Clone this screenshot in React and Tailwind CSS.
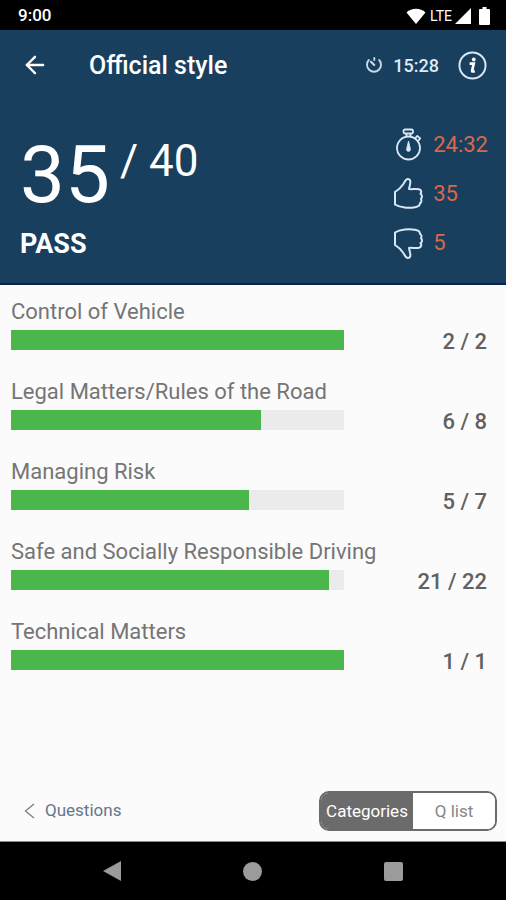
import React, { useState } from 'react';
import { ArrowLeft } from 'lucide-react';

const categories = [
  { name: 'Control of Vehicle', correct: 2, total: 2 },
  { name: 'Legal Matters/Rules of the Road', correct: 6, total: 8 },
  { name: 'Managing Risk', correct: 5, total: 7 },
  { name: 'Safe and Socially Responsible Driving', correct: 21, total: 22 },
  { name: 'Technical Matters', correct: 1, total: 1 },
];

const StopwatchIcon = () => (
  <svg width="32" height="34" viewBox="0 0 32 34" fill="none" stroke="#d9e8f6" strokeWidth="1.8" strokeLinejoin="round">
    <circle cx="16.500" cy="20" r="11.5" />
    <rect x="11.500" y="1.500" width="9.500" height="4" rx="1.5" />
    <path d="M14.500 6v2.500M18.500 6v2.500" />
    <path d="M23 10.500l2.300-2.600 2.900 2.500-2.200 2.600" />
    <path d="M16.500 13l-1.800 7.500a2 2 0 1 0 3.600 0z" fill="#d9e8f6" strokeWidth="0.8" />
  </svg>
);

const ThumbIcon = ({ className }) => (
  <svg className={className} width="32" height="34" viewBox="0 0 32 34" fill="none" stroke="#d9e8f6" strokeWidth="2" strokeLinejoin="round" strokeLinecap="round">
    <path d="M3 15C5.500 13.500 9 10.500 11 7.500C12.500 5.500 13.500 2 15.800 2C18.500 2 18.800 4.500 18 7.500L17 12C20 12.500 23.500 11.500 27 12.200C29.500 13 29.800 15.500 28.500 16.800C30.500 18 30.300 20.500 29 21.700C30 23.500 29.200 25.500 28 26.200C28 28.500 26 29.700 23 30.200C17 31.300 8 30.800 3 27.500z" />
  </svg>
);

const TimerIcon = () => (
  <svg width="18" height="18" viewBox="0 0 18 18" fill="none" stroke="#c8d9e8" strokeWidth="1.900" strokeLinecap="round">
    <path d="M3.800 4a7 7 0 1 0 10.400 0M9.300 2v2" />
    <path d="M6 5.800l3.200 3.200" strokeWidth="2.200" />
  </svg>
);

const StatusBar = () => (
  <div className="flex h-[30px] items-center justify-between bg-black pl-[18px] pr-4 pt-[2px] text-white">
    <span className="text-[17px] font-medium">9:00</span>
    <div className="flex items-center">
      <svg width="20" height="16" viewBox="0 0 20 16" fill="#fff">
        <path d="M10 16L0.500 4.500C5.500-.5 14.500-.5 19.500 4.500z" />
      </svg>
      <span className="ml-1 text-[14px]">LTE</span>
      <svg className="ml-[3px]" width="16" height="16" viewBox="0 0 16 16" fill="#fff">
        <path d="M16 0v16H0z" />
      </svg>
      <svg className="ml-2" width="11" height="18" viewBox="0 0 11 18" fill="#fff">
        <path d="M3.500 0h4v2H10q1 0 1 1v14q0 1-1 1H1q-1 0-1-1V3q0-1 1-1h2.500z" />
      </svg>
    </div>
  </div>
);

const Toolbar = () => (
  <header className="flex h-[70px] items-center pl-[21px] pr-[19px] text-white">
    <button aria-label="Back">
      <ArrowLeft size={28} strokeWidth={2} />
    </button>
    <h1 className="ml-10 flex-1 pt-[2px] text-[25px] font-medium">Official style</h1>
    <TimerIcon />
    <span className="ml-[10px] text-[18px] font-medium text-[#dfeaf5]">15:28</span>
    <button aria-label="Information" className="ml-[19px]">
      <svg width="29" height="29" viewBox="0 0 30 30" fill="none" stroke="#dbe9f7" strokeWidth="2">
        <circle cx="15" cy="15" r="13.500" />
        <circle cx="16.300" cy="8.800" r="2" fill="#fff" stroke="none" />
        <path d="M12 13h4.300l-1.700 7.500q-.2 1.200 2.700.3" stroke="#fff" strokeWidth="2.800" />
      </svg>
    </button>
  </header>
);

const Stat = ({ icon, value }) => (
  <div className="flex h-[49px] items-center gap-[9px]">
    {icon}
    <span className="text-[22px] text-[#d9674a]">{value}</span>
  </div>
);

const Summary = () => (
  <section className="flex justify-between border-b-2 border-[#0a2350] pb-4 pl-5 pr-[18px] pt-5 text-white">
    <div>
      <div className="flex items-start pt-[15px]">
        <span className="text-[80px] leading-[80px]">35</span>
        <span className="ml-[10px] text-[44px] leading-[52px]">/ 40</span>
      </div>
      <p className="mt-3 text-[27px] font-bold leading-[34px]">PASS</p>
    </div>
    <div>
      <Stat icon={<StopwatchIcon />} value="24:32" />
      <Stat icon={<ThumbIcon />} value="35" />
      <Stat icon={<ThumbIcon className="-scale-y-100" />} value="5" />
    </div>
  </section>
);

const CategoryRow = ({ name, correct, total }) => (
  <li className="h-20">
    <p className="text-[22px] leading-8 text-[#757575]">{name}</p>
    <div className="flex items-start justify-between">
      <div className="mt-[2px] h-5 w-[70%] bg-[#ebebeb]">
        <div className="h-full bg-[#4bb64b]" style={{ width: `${(correct / total) * 100}%` }} />
      </div>
      <span className="text-[22px] font-medium leading-7 text-[#616161]">{correct} / {total}</span>
    </div>
  </li>
);

const App = () => {
  const [view, setView] = useState('categories');
  const tabStyle = (key) =>
    view === key ? 'bg-[#6b6b6b] text-white' : 'bg-white text-[#858585]';

  return (
    <div className="flex min-h-screen flex-col bg-[#fbfbfb] font-[Roboto,sans-serif]">
      <StatusBar />
      <div className="bg-[#193f5e]">
        <Toolbar />
        <Summary />
      </div>

      <main className="flex-1 pl-[11px] pr-[19px] pt-[11px]">
        <ul>
          {categories.map((item) => (
            <CategoryRow key={item.name} {...item} />
          ))}
        </ul>
      </main>

      <footer className="flex items-center justify-between border-b border-[#8a8a8a] pb-[10px] pl-6 pr-[9px]">
        <button className="flex items-center gap-[10px] text-[17px] text-[#64758c]">
          <svg width="11" height="16" viewBox="0 0 11 16" fill="none" stroke="#808080" strokeWidth="1.400">
            <path d="M10 1L1.500 8l8.500 7" />
          </svg>
          Questions
        </button>
        <div className="flex h-10 overflow-hidden rounded-[10px] border-2 border-[#6b6b6b] text-[17px]">
          <button className={`w-[92px] pt-[2px] ${tabStyle('categories')}`} onClick={() => setView('categories')}>
            Categories
          </button>
          <button className={`w-[82px] pt-[2px] ${tabStyle('list')}`} onClick={() => setView('list')}>
            Q list
          </button>
        </div>
      </footer>

      {/* Android navigation */}
      <nav className="flex h-[58px] items-center justify-center gap-[122px] bg-black">
        <button aria-label="System back">
          <svg width="18" height="20" viewBox="0 0 18 20" fill="#9b9b9b">
            <path d="M18 0v20L0 10z" />
          </svg>
        </button>
        <button aria-label="Home" className="size-[19px] rounded-full bg-[#9b9b9b]" />
        <button aria-label="Recent apps" className="size-[19px] rounded-[2px] bg-[#9b9b9b]" />
      </nav>
    </div>
  );
};

export default App;
